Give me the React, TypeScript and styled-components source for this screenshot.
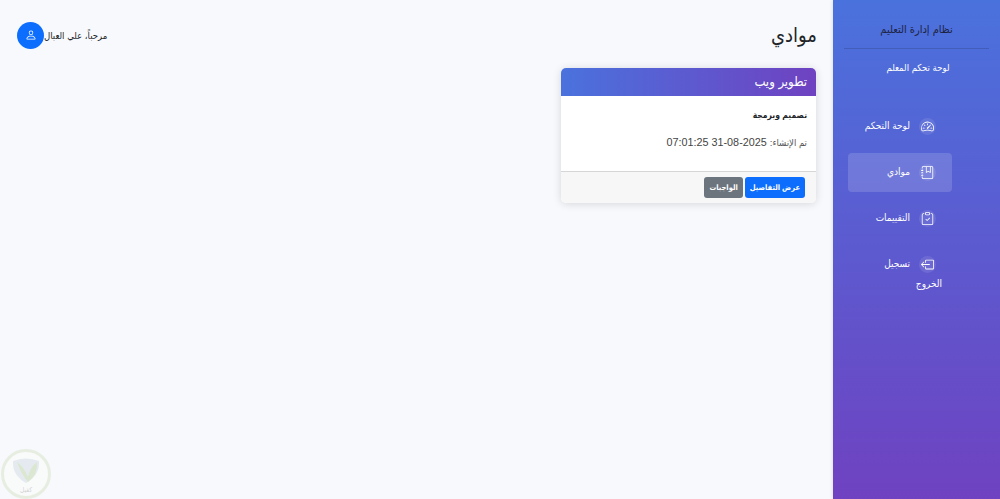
import React from 'react'
import styled, { createGlobalStyle } from 'styled-components'
import { BsSpeedometer2, BsJournalBookmark, BsClipboardCheck, BsBoxArrowLeft, BsPerson } from 'react-icons/bs'

const Global = createGlobalStyle`
  html, body { margin: 0; padding: 0; }
  body {
    font-family: "Liberation Sans", "DejaVu Sans Condensed", "DejaVu Sans", sans-serif;
    background: #f8f9fc;
    color: #212529;
  }
  * { box-sizing: border-box; }
`;

const Page = styled.div`
  direction: rtl;
  display: flex;
  width: 1000px;
  height: 499px;
  overflow: hidden;
  position: relative;
`;

const Sidebar = styled.aside`
  width: 167px;
  flex-shrink: 0;
  height: 100%;
  background: linear-gradient(180deg, #4a72dd 0%, #6f42c1 100%);
  padding: 0 11px;
  box-shadow: 0 0 4px rgba(0, 0, 0, 0.15);
`;

const Brand = styled.div`
  height: 49px;
  padding-top: 22px;
  text-align: center;
  font-size: 11px;
  line-height: 15px;
  color: #1d2240;
  border-bottom: 1px solid rgba(0, 0, 0, 0.15);
`;

const RoleTitle = styled.div`
  margin-top: 12px;
  padding-left: 3px;
  text-align: center;
  font-size: 9.5px;
  line-height: 14px;
  color: #fff;
`;

const Nav = styled.nav`
  display: flex;
  flex-direction: column;
  align-items: flex-end;
  margin-top: 32px;
  padding: 0 4px;
  gap: 7px;
`;

const NavItem = styled.a<{ $active?: boolean }>`
  display: block;
  width: 104px;
  min-height: 39px;
  border-radius: 4px;
  padding: 9px 10px 0 10px;
  font-size: 10px;
  line-height: 20px;
  color: #fff;
  background: ${(p) => (p.$active ? 'rgba(255, 255, 255, 0.15)' : 'transparent')};
`;

const IconCircle = styled.span`
  display: inline-flex;
  align-items: center;
  justify-content: center;
  width: 17px;
  height: 17px;
  margin-right: 6px;
  margin-left: 9px;
  border-radius: 50%;
  background: rgba(255, 255, 255, 0.1);
  font-size: 13px;
  vertical-align: middle;
`;

const Main = styled.main`
  flex: 1;
  padding: 17px 16px 0 17px;
`;

const TopBar = styled.header`
  display: flex;
  justify-content: space-between;
  align-items: center;
  height: 36px;
`;

const Heading = styled.h1`
  margin: 0;
  font-size: 20px;
  line-height: 30px;
  font-weight: 400;
  color: #212529;
`;

const UserBox = styled.div`
  display: flex;
  align-items: center;
  font-size: 9.5px;
  color: #212529;
`;

const Avatar = styled.span`
  display: inline-flex;
  align-items: center;
  justify-content: center;
  width: 27px;
  height: 27px;
  border-radius: 50%;
  background: #0d6efd;
  color: #fff;
  font-size: 12px;
`;

const Card = styled.section`
  width: 255px;
  margin-top: 15px;
  margin-right: 1px;
  border-radius: 5px;
  background: #fff;
  overflow: hidden;
  box-shadow: 0 1px 8px rgba(0, 0, 0, 0.14);
`;

const CardHeader = styled.div`
  height: 28px;
  padding: 0 9px;
  background: linear-gradient(270deg, #6f42c1 0%, #4a72dd 100%);
  color: #fff;
  font-size: 13px;
  line-height: 27px;
`;

const CardBody = styled.div`
  height: 76px;
  padding: 12px 9px 0;
  border-bottom: 1px solid #d5d6d8;
`;

const Subject = styled.div`
  font-size: 8.5px;
  font-weight: 700;
  line-height: 14px;
  color: #212529;
`;

const Meta = styled.div`
  margin-top: 13px;
  font-size: 10.8px;
  line-height: 14px;
  color: #444;
`;

const MetaLabel = styled.span`
  font-size: 9.5px;
  color: #555;
`;

const CardFooter = styled.div`
  display: flex;
  gap: 2px;
  height: 31px;
  padding: 5px 11px 0;
  background: #f7f7f8;
`;

const Button = styled.button<{ $kind: 'primary' | 'secondary' }>`
  height: 21px;
  padding: 0 5px;
  border: 0;
  border-radius: 3px;
  font-family: inherit;
  font-size: 7.5px;
  font-weight: 700;
  color: #fff;
  background: ${(p) => (p.$kind === 'primary' ? '#0d6efd' : '#6c757d')};
`;

const Watermark = styled.svg`
  position: absolute;
  left: 0;
  bottom: 0;
  width: 52px;
  height: 51px;
  opacity: 0.4;
`;

export default function App() {
  return (
    <Page>
      <Global />
      <Sidebar>
        <Brand>نظام إدارة التعليم</Brand>
        <RoleTitle>لوحة تحكم المعلم</RoleTitle>
        <Nav>
          <NavItem><IconCircle><BsSpeedometer2 /></IconCircle>لوحة التحكم</NavItem>
          <NavItem $active><IconCircle><BsJournalBookmark /></IconCircle>موادي</NavItem>
          <NavItem><IconCircle><BsClipboardCheck /></IconCircle>التقييمات</NavItem>
          <NavItem><IconCircle><BsBoxArrowLeft /></IconCircle>تسجيل الخروج</NavItem>
        </Nav>
      </Sidebar>
      <Main>
        <TopBar>
          <Heading>موادي</Heading>
          <UserBox>
            <span>مرحباً، علي العبال</span>
            <Avatar><BsPerson /></Avatar>
          </UserBox>
        </TopBar>
        <Card>
          <CardHeader>تطوير ويب</CardHeader>
          <CardBody>
            <Subject>تصميم وبرمجة</Subject>
            <Meta><MetaLabel>تم الإنشاء:</MetaLabel> 2025-08-31 07:01:25</Meta>
          </CardBody>
          <CardFooter>
            <Button $kind="primary">عرض التفاصيل</Button>
            <Button $kind="secondary">الواجبات</Button>
          </CardFooter>
        </Card>
      </Main>
      <Watermark viewBox="0 0 52 51">
        <circle cx="26" cy="26" r="23.5" fill="#fbfcf8" stroke="#cfe0bb" strokeWidth="3" />
        <path d="M13 13 Q26 8 39 13 Q40 27 26 35 Q12 27 13 13 Z" fill="#c9d6df" />
        <path d="M17 14 Q21 26 28 34 Q38 27 37 14 Q30 19 28 29 Q24 19 17 14 Z" fill="#b4cd94" />
        <text x="26" y="44" textAnchor="middle" fontSize="6.5" fill="#999">كفيل</text>
      </Watermark>
    </Page>
  )
}
